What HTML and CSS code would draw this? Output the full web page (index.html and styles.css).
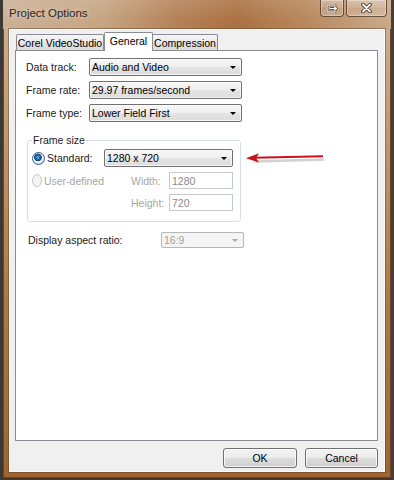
FILE: index.html
```html
<!DOCTYPE html>
<html lang="en">

<head>
    <meta charset="UTF-8">
    <meta name="viewport" content="width=device-width, initial-scale=1.0">
    <title>Project Options</title>
    <link rel="stylesheet" href="styles.css">
</head>

<body>
    <div class="window">
        <div class="titlebar">
            <span class="title">Project Options</span>
            <div class="caption-btns">
                <span class="cap-btn cap-extra">
                    <svg width="12" height="9" viewBox="0 0 12 9">
                        <rect x="1" y="1" width="8" height="7" fill="none" stroke="#4a3a2c" stroke-width="2.4"/>
                        <rect x="1" y="1" width="8" height="7" fill="none" stroke="#fff" stroke-width="1.2"/>
                        <path d="M4 4.5h6M8 2.5l2.5 2-2.5 2" fill="none" stroke="#4a3a2c" stroke-width="2.4"/>
                        <path d="M4 4.5h6M8 2.5l2.5 2-2.5 2" fill="none" stroke="#fff" stroke-width="1.2"/>
                    </svg>
                </span>
                <span class="cap-btn cap-close">
                    <svg width="11" height="10" viewBox="0 0 11 10">
                        <path d="M2 1.5l7 7M9 1.5l-7 7" stroke="#3d3026" stroke-width="3.6" stroke-linecap="round"/>
                        <path d="M2 1.5l7 7M9 1.5l-7 7" stroke="#fff" stroke-width="1.8" stroke-linecap="round"/>
                    </svg>
                </span>
            </div>
        </div>

        <div class="client">
            <div class="tabs">
                <span class="tab tab-corel">Corel VideoStudio</span>
                <span class="tab tab-general active">General</span>
                <span class="tab tab-compression">Compression</span>
            </div>

            <div class="panel">
                <div class="row">
                    <span class="label">Data track:</span>
                    <div class="combo combo-main"><span>Audio and Video</span><i class="caret"></i></div>
                </div>
                <div class="row">
                    <span class="label">Frame rate:</span>
                    <div class="combo combo-main"><span>29.97 frames/second</span><i class="caret"></i></div>
                </div>
                <div class="row">
                    <span class="label">Frame type:</span>
                    <div class="combo combo-main"><span>Lower Field First</span><i class="caret"></i></div>
                </div>

                <fieldset class="group">
                    <legend>Frame size</legend>
                    <div class="group-grid">
                        <span class="radio"><span class="radio-dot checked"></span>Standard:</span>
                        <div class="combo combo-size"><span>1280 x 720</span><i class="caret"></i></div>

                        <span class="radio disabled"><span class="radio-dot"></span>User-defined</span>
                        <span class="field-label">Width:</span>
                        <span class="input">1280</span>

                        <span></span>
                        <span class="field-label">Height:</span>
                        <span class="input">720</span>
                    </div>
                </fieldset>

                <div class="row row-aspect">
                    <span class="label label-wide">Display aspect ratio:</span>
                    <div class="combo combo-disabled"><span>16:9</span><i class="caret"></i></div>
                </div>

                <svg class="note-arrow" width="84" height="18" viewBox="0 0 84 18">
                    <path d="M11 11.5 L80 9.5" stroke="#9a9a9a" stroke-width="2.5" opacity="0.45"/>
                    <path d="M10 7.8 L79 6.2" stroke="#c8121b" stroke-width="2"/>
                    <path d="M2 8.2 L15 3.2 L12 8 L15 12.6 Z" fill="#c8121b"/>
                </svg>
            </div>

            <div class="buttons">
                <span class="btn btn-ok">OK</span>
                <span class="btn btn-cancel">Cancel</span>
            </div>
        </div>
    </div>
</body>

</html>
```

FILE: styles.css
```css
/* Reset */
body {
    margin: 0;
    padding: 0;
    background-color: #fff;
    font-family: 'Liberation Sans', Arial, sans-serif;
    font-size: 10.5px;
    color: #000;
}

/* Window frame */
.window {
    width: 394px;
    height: 480px;
    box-sizing: border-box;
    border-left: 3px solid #3c3833;
    border-right: 3px solid #45403a;
    border-bottom: 2px solid #4b3522;
    padding: 0 6px 6px;
    display: flex;
    flex-direction: column;
    background: linear-gradient(to bottom, #cdb39a 0, #c39a72 120px, #b07944 300px, #9e6530 480px);
    box-shadow: inset 1px 0 #6a4527, inset -1px 0 #6a4527, inset 0 -1px #6a4020;
}

/* Title bar */
.titlebar {
    height: 29px;
    margin: 0 -6px;
    padding: 0 4px 0 6px;
    display: flex;
    align-items: flex-start;
    background:
        linear-gradient(to bottom, rgba(255, 255, 255, 0.12), rgba(255, 255, 255, 0) 20px),
        linear-gradient(to right, #ccb096 0%, #c6a684 25%, #b58157 45%, #ab7142 60%, #b8885d 78%, #c9aa8c 100%);
}

.title {
    flex: 1;
    padding-top: 7px;
    font-size: 11.5px;
    color: #2a2622;
    text-shadow: 0 0 6px rgba(255, 255, 255, 0.7);
}

.caption-btns {
    display: flex;
    gap: 2px;
}

.cap-btn {
    height: 17px;
    display: flex;
    align-items: center;
    justify-content: center;
    box-sizing: border-box;
    border: 1px solid rgba(70, 45, 25, 0.75);
    border-top: none;
    border-radius: 0 0 4px 4px;
    background: linear-gradient(to bottom, rgba(255, 255, 255, 0.3), rgba(255, 255, 255, 0.12) 50%, rgba(255, 255, 255, 0.05) 51%, rgba(255, 255, 255, 0.2));
    box-shadow: inset 0 0 0 1px rgba(255, 255, 255, 0.3);
}

.cap-extra {
    width: 24px;
}

.cap-close {
    width: 41px;
}

/* Client area */
.client {
    flex: 1;
    display: flex;
    flex-direction: column;
    background-color: #f0f0f0;
    border: 1px solid #fbfbfb;
    box-shadow: 0 0 0 1px rgba(90, 60, 35, 0.45);
    padding: 2px 6px 3px 5px;
}

/* Tabs */
.tabs {
    height: 18px;
    display: flex;
    align-items: flex-end;
    padding-left: 1px;
}

.tab {
    height: 16px;
    box-sizing: border-box;
    display: flex;
    align-items: center;
    justify-content: center;
    border: 1px solid #898c95;
    border-bottom: none;
    border-radius: 2px 2px 0 0;
    background: linear-gradient(to bottom, #f5f5f5, #ebebeb 50%, #e1e1e1 51%, #dcdcdc);
    padding-top: 1px;
}

.tab-corel {
    width: 88px;
}

.tab-general {
    width: 49px;
}

.tab-compression {
    width: 66px;
    margin-left: -1px;
}

.tab.active {
    height: 19px;
    margin-bottom: -1px;
    background: #fff;
    position: relative;
    z-index: 1;
    padding-top: 0;
    padding-bottom: 3px;
}

/* Panel */
.panel {
    height: 391px;
    box-sizing: border-box;
    background-color: #fff;
    border: 1px solid #898c95;
    padding: 7px 0 0 10px;
    display: flex;
    flex-direction: column;
    align-items: flex-start;
    position: relative;
}

.row {
    display: flex;
    align-items: center;
    height: 18px;
}

.row + .row {
    margin-top: 5px;
}

.label {
    width: 63px;
    color: #1a1a1a;
}

.label-wide {
    width: 133px;
}

/* Combo boxes */
.combo {
    height: 18px;
    box-sizing: border-box;
    display: flex;
    align-items: center;
    border: 1px solid #707070;
    border-radius: 2px;
    padding: 0 5px 0 2px;
    background: linear-gradient(to bottom, #f7f7f7, #eeeeee 50%, #e4e4e4 51%, #dcdcdc);
    box-shadow: inset 0 0 0 1px rgba(255, 255, 255, 0.7);
}

.combo span {
    flex: 1;
}

.combo-main {
    width: 153px;
}

.combo-size {
    grid-column: 2 / 4;
    width: 129px;
}

.combo-disabled {
    width: 83px;
    height: 16px;
    border-color: #b4b6b8;
    background: #f4f4f4;
    color: #a3a3a3;
    box-shadow: none;
}

.caret {
    width: 0;
    height: 0;
    border-left: 3px solid transparent;
    border-right: 3px solid transparent;
    border-top: 3px solid #000;
}

.combo-disabled .caret {
    border-top-color: #a8a8a8;
}

/* Frame size group */
.group {
    margin: 12px 0 0 1px;
    width: 214px;
    box-sizing: border-box;
    border: 1px solid #d5dfe5;
    border-radius: 3px;
    padding: 2px 7px 10px 4px;
    min-inline-size: 0;
}

.group legend {
    padding: 0 1px;
    line-height: 13px;
    color: #1a1a1a;
}

.group-grid {
    display: grid;
    grid-template-columns: 72px 65px 64px;
    grid-template-rows: 18px 17px 17px;
    row-gap: 5px;
    align-items: center;
}

.radio {
    display: flex;
    align-items: center;
    gap: 2px;
    white-space: nowrap;
    color: #1a1a1a;
}

.radio.disabled {
    color: #a6a6a6;
}

.radio-dot {
    width: 13px;
    height: 13px;
    box-sizing: border-box;
    border-radius: 50%;
    border: 1px solid #8e8f8f;
    background: radial-gradient(circle at 50% 50%, #f4f4f4 0, #e2e2e2 5.5px);
}

.radio-dot.checked {
    border-color: #2c628b;
    background: radial-gradient(circle at 45% 40%, #69b0ea 0, #2a72b5 1.8px, #16467a 3.5px, #fff 4.3px, #fff 4.8px, #dcdcdc 6px);
}

.radio.disabled .radio-dot {
    border-color: #c8c8c8;
    background: #f4f4f4;
}

.field-label {
    padding-left: 27px;
    color: #a6a6a6;
}

.input {
    height: 17px;
    box-sizing: border-box;
    border: 1px solid #c5c9cd;
    padding-left: 2px;
    display: flex;
    align-items: center;
    color: #8a8a8a;
    background-color: #fff;
}

.row-aspect {
    margin-top: 10px;
    margin-left: 2px;
    height: 16px;
}

/* Annotation arrow */
.note-arrow {
    position: absolute;
    left: 228px;
    top: 99px;
}

/* Buttons */
.buttons {
    display: flex;
    justify-content: flex-end;
    gap: 8px;
    margin-top: 7px;
}

.btn {
    height: 20px;
    box-sizing: border-box;
    display: flex;
    align-items: center;
    justify-content: center;
    border: 1px solid #707070;
    border-radius: 3px;
    background: linear-gradient(to bottom, #f2f2f2, #ebebeb 50%, #dddddd 51%, #cfcfcf);
    box-shadow: inset 0 0 0 1px rgba(255, 255, 255, 0.75);
    color: #000;
}

.btn-ok {
    width: 74px;
}

.btn-cancel {
    width: 73px;
}
```
